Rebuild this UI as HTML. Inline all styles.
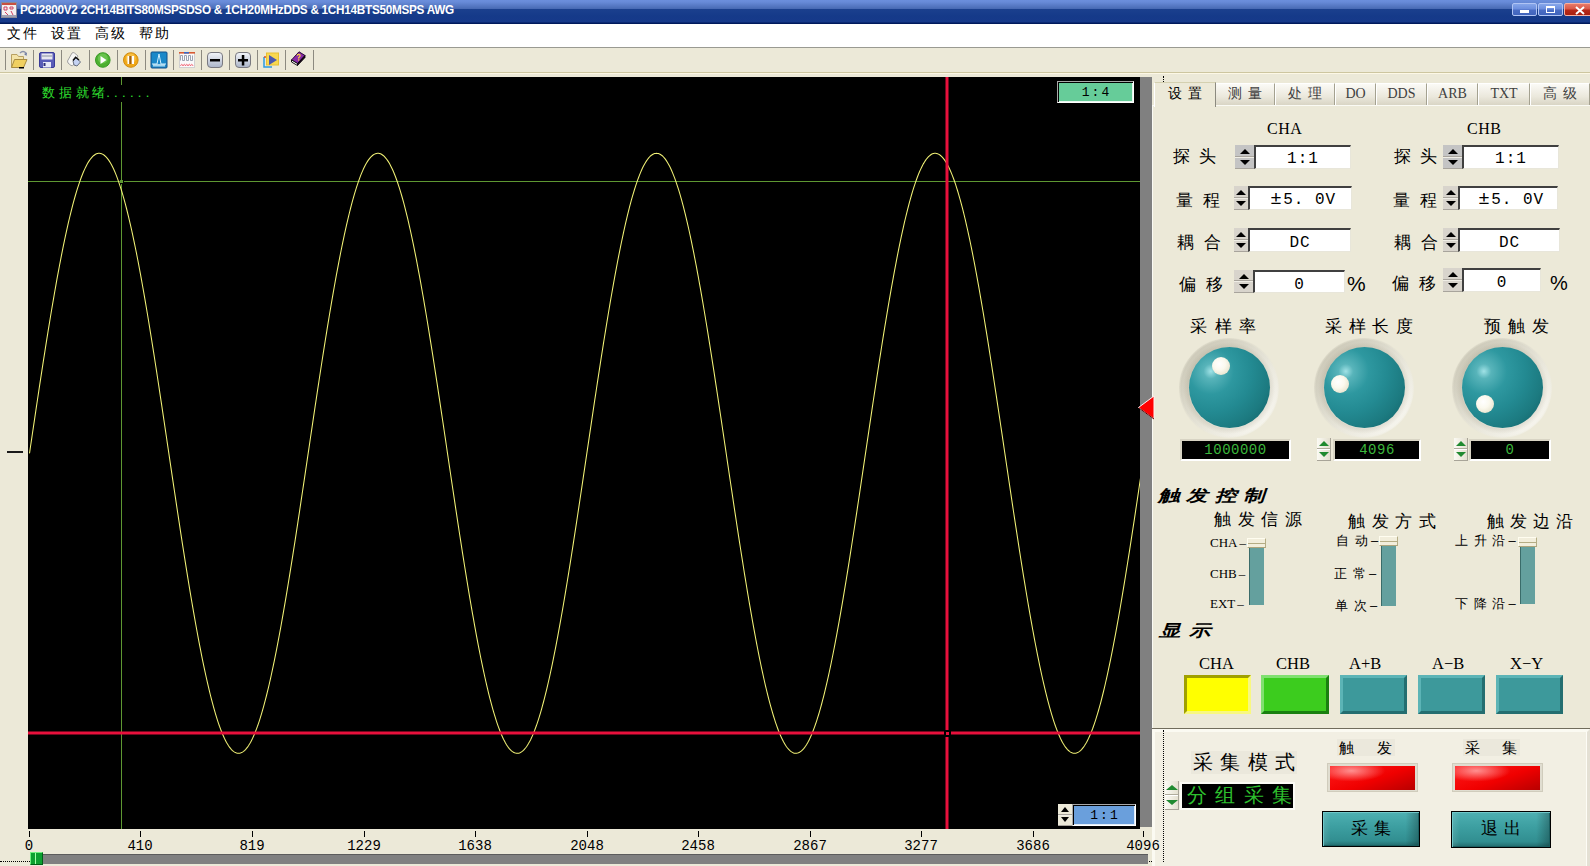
<!DOCTYPE html>
<html><head><meta charset="utf-8">
<style>
*{margin:0;padding:0;box-sizing:border-box}
html,body{width:1590px;height:866px;overflow:hidden;background:#ece9d8;font-family:"Liberation Sans",sans-serif;position:relative}
.a{position:absolute}
.cj{font-family:"Liberation Sans",sans-serif;white-space:nowrap}
.mono{font-family:"Liberation Mono",monospace;white-space:nowrap}
.serif{font-family:"Liberation Serif",serif;white-space:nowrap}
/* title */
#title{left:0;top:0;width:1590px;height:24px;background:linear-gradient(#6b8fdd 0px,#688bd8 2px,#4c6eb8 8px,#4668b2 9px,#1b408e 9px,#153a89 16px,#16398a 22px,#001a5c 23px,#001a5c 24px)}
#ttext{left:20px;top:2px;color:#fff;font-weight:bold;font-size:13px;letter-spacing:-0.3px;transform-origin:0 0;transform:scaleX(0.903);white-space:nowrap}
.tbtn{top:3px;height:13px;border:1px solid #b0c4f4;border-radius:2px;background:linear-gradient(#86a6ea 0%,#6c8ede 45%,#4a6cc4 55%,#4064bc 100%)}
/* menu */
#menu{left:0;top:24px;width:1590px;height:23px;background:#fff}
.mi{top:25px;font-size:14px;color:#000;letter-spacing:2px}
#tb{left:0;top:47px;width:1590px;height:26px;background:#ece9d8;border-top:1px solid #9a9a92}
.sep{top:50px;width:1px;height:20px;background:#8c8a80}
#tbl{left:0;top:72px;width:1590px;height:1px;background:#cdc6a0}
#tbl2{left:0;top:73px;width:1590px;height:1px;background:#fdf8e6}
/* scope */
#scope{left:28px;top:77px;width:1112px;height:752px;background:#000;overflow:hidden}
#gbar{left:1140px;top:77px;width:12px;height:750px;background:#808080}
.tick{top:831px;width:1px;height:6px;background:#000}
.xl{top:838px;font-size:14px;color:#000;font-family:"Liberation Mono",monospace;transform:translateX(-50%)}
/* panel */
#panel{left:1152px;top:105px;width:438px;height:623px;background:#ece9d8;border-left:1px solid #fafaf4;border-top:1px solid #fafaf4}
.tab{top:83px;height:22px;font-size:14px;color:#404040;text-align:center;line-height:19px;
 background:linear-gradient(#fbfaf6,#ebe8dc 60%,#d9d5c5);border-top:1px solid #fff;border-left:1px solid #fff;border-right:1px solid #a4a190}
.lbl{font-size:17px;color:#000}
.fld{background:#fff;font-family:"Liberation Mono",monospace;letter-spacing:1px;border-top:2px solid #404040;border-left:2px solid #404040;border-right:1px solid #e8e6da;border-bottom:1px solid #e8e6da;text-align:center;font-size:16px;color:#000;white-space:nowrap}
.spn{background:#d8d4cc;border-bottom:1px solid #a8a49c}
.spn i{position:absolute;left:50%;margin-left:-5px;width:0;height:0;border-left:5px solid transparent;border-right:5px solid transparent}
.spn .u{top:4px;border-bottom:5px solid #000}.spn .d{bottom:3px;border-top:5px solid #000}
.spn .m{position:absolute;left:0;right:0;top:50%;height:2px;margin-top:-1px;background:#f0eee6;border-top:1px solid #a8a49c}
.gspn i{position:absolute;left:50%;margin-left:-5px;width:0;height:0;border-left:5px solid transparent;border-right:5px solid transparent}
.gspn .u{top:3px;border-bottom:5px solid #208a30}.gspn .d{bottom:3px;border-top:5px solid #208a30}
.gspn .m{position:absolute;left:0;right:0;top:50%;height:2px;margin-top:-1px;background:#fff;border-top:1px solid #b0ac9c}
.knob{width:100px;height:100px;border-radius:50%;background:radial-gradient(circle at 50% 50%,rgba(0,0,0,0) 39px,rgba(90,80,50,0.10) 41px,rgba(0,0,0,0) 46px,rgba(255,255,255,0) 48px,rgba(236,233,216,0.6) 50px),linear-gradient(135deg,#c6c2b0 0%,#d6d3c4 30%,#ebe9de 62%,#fcfbf6 100%)}
.kb{position:absolute;left:10px;top:9px;width:81px;height:81px;border-radius:50%;background:radial-gradient(circle at 27% 30%,#a0e2e6 0%,#58b4ba 9%,#2e98a0 28%,#238a92 50%,#1c7a80 72%,#15686e 88%,#0a4448 100%)}
.kd{position:absolute;width:18px;height:18px;border-radius:50%;background:radial-gradient(circle at 40% 38%,#ffffff 0%,#fbf9ee 40%,#e8e4ce 78%,#cdc9b0 100%)}
.lcd{background:#000;border:2px solid #fff;border-top-color:#d8d4c4;border-left-color:#d8d4c4;color:#3cb83c;font-size:14px;text-align:center;line-height:18px;letter-spacing:0.5px}
.gspn{background:linear-gradient(90deg,#fbfaf4,#e4e0d0);border-right:1px solid #a8a498;border-bottom:1px solid #a8a498}
.sl{font-size:13px;color:#000}
.trk{background:#64a09e;border-left:1px solid #3a6c6a}
.thm{background:#f2eedc;border:1px solid;border-color:#fffdf0 #b4ac84 #aca47c #fffdf0}
.thm:after{content:"";position:absolute;left:0;right:0;top:4px;height:1px;background:#b4ac84}
.dl{top:654px;font-size:16.5px;color:#000}
.btn3{top:675px;height:39px;background:#3d999b;border:3px solid;border-color:#5cb4b6 #246e70 #246e70 #5cb4b6}
.led{width:91px;height:29px;background:#e0ddd0;border:1px solid #d0ccbc}
.led:after{content:"";position:absolute;left:2px;top:2px;width:85px;height:24px;background:radial-gradient(ellipse 40% 45% at 25% 20%,#ff9090 0%,rgba(255,40,40,0) 100%),linear-gradient(160deg,#ff1a1a 0%,#f00000 55%,#b80000 100%)}
.bbtn{background:linear-gradient(90deg,rgba(255,255,255,0.12) 0,rgba(255,255,255,0) 8%,rgba(0,0,0,0) 86%,rgba(0,0,0,0.28) 100%),linear-gradient(#4eb0b2,#3c9ea0 45%,#318e90 85%,#226a6c);border:1px solid #000;box-shadow:inset 1px 1px 0 #70c8ca,inset -1px -1px 0 #1a5e60;font-size:17px;text-align:center;line-height:33px;letter-spacing:6px;padding-left:6px}
</style></head><body>
<!-- title bar -->
<div id="title" class="a"></div>
<svg class="a" style="left:1px;top:2px" width="16" height="16"><rect x="0.5" y="0.5" width="15" height="15" fill="#f4f0f0" stroke="#8a8a98"/><rect x="1" y="1" width="14" height="2" fill="#c85040"/><path d="M3 5 h3 v3 h-3z M9 5 h3 v2 h-3z M4 10 l3 3 M10 9 l2 4" stroke="#d04060" stroke-width="1" fill="none"/><rect x="1" y="13" width="14" height="2" fill="#a0a0b0"/></svg>
<div id="ttext" class="a">PCI2800V2 2CH14BITS80MSPSDSO &amp; 1CH20MHzDDS &amp; 1CH14BTS50MSPS AWG</div>
<div class="a tbtn" style="left:1512px;width:25px"><div class="a" style="left:7px;top:6px;width:9px;height:3px;background:#fff"></div></div>
<div class="a tbtn" style="left:1538px;width:25px"><div class="a" style="left:7px;top:2px;width:9px;height:7px;border:1px solid #fff;border-top-width:2px"></div></div>
<div class="a tbtn" style="left:1564px;width:30px;background:linear-gradient(#e87a68 0%,#d85848 45%,#b82818 55%,#a82010 100%);border-color:#f8b0a0 #f8b0a0 #f8b0a0 #f8b0a0"><svg class="a" style="left:10px;top:2px" width="10" height="9"><path d="M1 1 L9 8 M9 1 L1 8" stroke="#fff" stroke-width="2"/></svg></div>
<!-- menu -->
<div id="menu" class="a"></div>
<div class="a mi cj" style="left:7px">文件</div>
<div class="a mi cj" style="left:51px">设置</div>
<div class="a mi cj" style="left:95px">高级</div>
<div class="a mi cj" style="left:139px">帮助</div>
<!-- toolbar -->
<div id="tb" class="a"></div>
<div id="tbl" class="a"></div>
<div id="tbl2" class="a"></div>
<div class="a sep" style="left:5px"></div>
<div class="a sep" style="left:33px"></div>
<div class="a sep" style="left:61px"></div>
<div class="a sep" style="left:89px"></div>
<div class="a sep" style="left:117px"></div>
<div class="a sep" style="left:145px"></div>
<div class="a sep" style="left:173px"></div>
<div class="a sep" style="left:201px"></div>
<div class="a sep" style="left:229px"></div>
<div class="a sep" style="left:257px"></div>
<div class="a sep" style="left:285px"></div>
<div class="a sep" style="left:313px"></div>
<svg class="a" style="left:0;top:48px" width="320" height="24">
 <!-- folder -->
 <path d="M11.5 19.5 V6.5 H17 L18.5 8.5 H23.5 V11" fill="#f3e3a6" stroke="#b8a060" stroke-width="1"/>
 <path d="M11.5 19.5 L14.5 11.5 H27 L23.5 19.5 Z" fill="#f0d060" stroke="#a88c40" stroke-width="1"/>
 <rect x="19" y="19" width="5" height="1.5" fill="#000"/>
 <path d="M20 5 Q23 2 26 5" fill="none" stroke="#8890a8" stroke-width="1.3"/>
 <path d="M24 6 L27 4.5 L26.5 8 Z" fill="#6a78a0"/>
 <!-- floppy -->
 <rect x="39.5" y="4.5" width="15" height="15" rx="1.5" fill="#5a5cb8" stroke="#3a3c98"/>
 <rect x="41.5" y="5.5" width="11" height="6" fill="#e8e8f0"/>
 <rect x="42" y="7" width="10" height="2" fill="#b8bcc8"/>
 <rect x="43" y="14" width="8" height="5.5" fill="#e8e8f8"/>
 <rect x="43.5" y="15" width="2" height="3" fill="#2a2c78"/>
 <!-- print -->
 <path d="M67.5 13 L72 5 Q73 4 74.5 5 L78 8 L73.5 17 Q72.5 18 71 17.5 L68 15 Z" fill="#f6f6f4" stroke="#a0a0a0" stroke-width="1"/>
 <path d="M73 13 L76 9.5 L80.5 14 L77 18 L74 17 Z" fill="#c4d2f2" stroke="#687080" stroke-width="1"/>
 <path d="M73 12.5 L75.6 9.2 L79 12" fill="none" stroke="#101010" stroke-width="1.5"/>
 <!-- play -->
 <circle cx="102.8" cy="12" r="7.3" fill="#4cb030" stroke="#3a9a28"/>
 <circle cx="102.8" cy="10.5" r="5" fill="#7cd060" opacity="0.6"/>
 <path d="M100.5 8 L106.5 12 L100.5 16 Z" fill="#fff"/>
 <!-- pause -->
 <circle cx="130.8" cy="12" r="7.3" fill="#f0a818" stroke="#d08c10"/>
 <circle cx="130.8" cy="10.5" r="5" fill="#ffd060" opacity="0.6"/>
 <rect x="127.5" y="8" width="2.5" height="8" fill="#fff"/>
 <rect x="131.5" y="8" width="2.5" height="8" fill="#fff"/>
 <rect x="129.2" y="8" width="2.3" height="8" fill="#a06010"/>
 <!-- fft -->
 <rect x="151" y="4" width="16" height="16" rx="1" fill="#1a88c8" stroke="#10508a"/>
 <path d="M152 16 H157 L159 6 L161 16 H166" fill="none" stroke="#d0f0ff" stroke-width="1"/>
 <rect x="153" y="16" width="12" height="2.5" fill="#c8e8f8" opacity="0.8"/>
 <!-- wave chart -->
 <rect x="179.5" y="4.5" width="15" height="15" fill="#fafafa" stroke="#d0d0d0"/>
 <rect x="179" y="4" width="16" height="1.6" fill="#d85a30"/>
 <rect x="184" y="4" width="5" height="1.6" fill="#3a6ac8"/>
 <path d="M180.5 12.5 V7.5 H182.5 V12.5 H184.5 V7.5 H186.5 V12.5 H188.5 V7.5 H190.5 V12.5 H192.5 V7.5" fill="none" stroke="#9098a8" stroke-width="0.9"/>
 <path d="M180.5 18 Q181.8 14.5 183 18 Q184.3 14.5 185.5 18 Q186.8 14.5 188 18 Q189.3 14.5 190.5 18 Q191.8 14.5 193 18" fill="none" stroke="#f06070" stroke-width="0.9"/>
 <!-- minus -->
 <rect x="207.5" y="4.5" width="15" height="15" rx="3.5" fill="url(#gbtn)" stroke="#7a7a80"/>
 <rect x="210" y="11" width="10" height="2.5" fill="#000"/>
 <!-- plus -->
 <rect x="235.5" y="4.5" width="15" height="15" rx="3.5" fill="url(#gbtn)" stroke="#7a7a80"/>
 <rect x="238" y="11" width="10" height="2.5" fill="#000"/>
 <rect x="241.8" y="7" width="2.5" height="10.5" fill="#000"/>
 <!-- play window -->
 <path d="M264 9 V19 H272" fill="none" stroke="#2a9ae0" stroke-width="1.5"/>
 <path d="M264 9 H266" fill="none" stroke="#e05020" stroke-width="1.5"/>
 <rect x="266.5" y="5" width="12" height="12" fill="#f8d850" stroke="#e8c030"/>
 <path d="M269 7 L277 12 L269 17 Z" fill="#4a58b0"/>
 <!-- book -->
 <path d="M291.5 12 L299 3.8 L305 7.5 L297.5 15.5 Z" fill="#8a2ca8" stroke="#2a0838" stroke-width="1"/>
 <path d="M291.5 12 L297.5 15.5 L297.5 17.5 L291.5 14 Z" fill="#fff" stroke="#000" stroke-width="0.9"/>
 <path d="M297.5 15.5 L305 7.5 L305 9.5 L297.5 17.5" fill="#1a0420" stroke="#000" stroke-width="0.8"/>
 <path d="M297 7.5 Q298.5 5.5 300 7 Q300.5 8.5 298.8 9.5 L298.5 10.5" fill="none" stroke="#f8d040" stroke-width="1.3"/>
 <rect x="298" y="11.3" width="1.3" height="1.3" fill="#f8d040"/>
 <defs><linearGradient id="gbtn" x1="0" y1="0" x2="0" y2="1"><stop offset="0" stop-color="#f4f6fa"/><stop offset="1" stop-color="#aab4c8"/></linearGradient></defs>
</svg>

<!-- scope -->
<div id="scope" class="a">
<svg width="1112" height="752" style="position:absolute;left:0;top:0">
 <line x1="0" y1="104.5" x2="1112" y2="104.5" stroke="#5e9832" stroke-width="1"/>
 <line x1="93.5" y1="0" x2="93.5" y2="752" stroke="#5e9832" stroke-width="1"/>
 <path d="M1.5 376.3 L2.5 369.5 L3.5 362.8 L4.5 356.0 L5.5 349.3 L6.5 342.6 L7.5 335.8 L8.5 329.1 L9.5 322.5 L10.5 315.8 L11.5 309.2 L12.5 302.7 L13.5 296.1 L14.5 289.6 L15.5 283.2 L16.5 276.8 L17.5 270.4 L18.5 264.1 L19.5 257.9 L20.5 251.7 L21.5 245.6 L22.5 239.5 L23.5 233.5 L24.5 227.6 L25.5 221.8 L26.5 216.0 L27.5 210.3 L28.5 204.7 L29.5 199.2 L30.5 193.8 L31.5 188.5 L32.5 183.3 L33.5 178.1 L34.5 173.1 L35.5 168.2 L36.5 163.4 L37.5 158.7 L38.5 154.1 L39.5 149.6 L40.5 145.2 L41.5 141.0 L42.5 136.8 L43.5 132.8 L44.5 128.9 L45.5 125.2 L46.5 121.5 L47.5 118.0 L48.5 114.6 L49.5 111.4 L50.5 108.3 L51.5 105.3 L52.5 102.5 L53.5 99.8 L54.5 97.2 L55.5 94.8 L56.5 92.6 L57.5 90.4 L58.5 88.5 L59.5 86.6 L60.5 84.9 L61.5 83.4 L62.5 82.0 L63.5 80.8 L64.5 79.7 L65.5 78.7 L66.5 78.0 L67.5 77.3 L68.5 76.8 L69.5 76.5 L70.5 76.3 L71.5 76.3 L72.5 76.4 L73.5 76.7 L74.5 77.1 L75.5 77.7 L76.5 78.5 L77.5 79.4 L78.5 80.4 L79.5 81.6 L80.5 82.9 L81.5 84.4 L82.5 86.0 L83.5 87.8 L84.5 89.8 L85.5 91.8 L86.5 94.0 L87.5 96.4 L88.5 98.9 L89.5 101.6 L90.5 104.4 L91.5 107.3 L92.5 110.3 L93.5 113.5 L94.5 116.9 L95.5 120.3 L96.5 123.9 L97.5 127.6 L98.5 131.5 L99.5 135.5 L100.5 139.6 L101.5 143.8 L102.5 148.1 L103.5 152.5 L104.5 157.1 L105.5 161.8 L106.5 166.6 L107.5 171.5 L108.5 176.4 L109.5 181.5 L110.5 186.7 L111.5 192.0 L112.5 197.4 L113.5 202.9 L114.5 208.5 L115.5 214.1 L116.5 219.8 L117.5 225.6 L118.5 231.5 L119.5 237.5 L120.5 243.5 L121.5 249.6 L122.5 255.8 L123.5 262.0 L124.5 268.3 L125.5 274.6 L126.5 281.0 L127.5 287.5 L128.5 293.9 L129.5 300.5 L130.5 307.0 L131.5 313.6 L132.5 320.3 L133.5 326.9 L134.5 333.6 L135.5 340.3 L136.5 347.0 L137.5 353.8 L138.5 360.5 L139.5 367.3 L140.5 374.0 L141.5 380.8 L142.5 387.6 L143.5 394.3 L144.5 401.1 L145.5 407.8 L146.5 414.5 L147.5 421.2 L148.5 427.9 L149.5 434.5 L150.5 441.2 L151.5 447.7 L152.5 454.3 L153.5 460.8 L154.5 467.3 L155.5 473.7 L156.5 480.1 L157.5 486.4 L158.5 492.7 L159.5 498.9 L160.5 505.0 L161.5 511.1 L162.5 517.1 L163.5 523.0 L164.5 528.9 L165.5 534.7 L166.5 540.4 L167.5 546.0 L168.5 551.5 L169.5 557.0 L170.5 562.3 L171.5 567.6 L172.5 572.7 L173.5 577.8 L174.5 582.8 L175.5 587.6 L176.5 592.4 L177.5 597.0 L178.5 601.5 L179.5 605.9 L180.5 610.2 L181.5 614.4 L182.5 618.5 L183.5 622.4 L184.5 626.2 L185.5 629.9 L186.5 633.4 L187.5 636.8 L188.5 640.1 L189.5 643.3 L190.5 646.3 L191.5 649.2 L192.5 651.9 L193.5 654.5 L194.5 657.0 L195.5 659.3 L196.5 661.5 L197.5 663.5 L198.5 665.4 L199.5 667.1 L200.5 668.7 L201.5 670.1 L202.5 671.4 L203.5 672.6 L204.5 673.6 L205.5 674.4 L206.5 675.1 L207.5 675.6 L208.5 676.0 L209.5 676.2 L210.5 676.3 L211.5 676.2 L212.5 676.0 L213.5 675.6 L214.5 675.1 L215.5 674.4 L216.5 673.6 L217.5 672.6 L218.5 671.4 L219.5 670.1 L220.5 668.7 L221.5 667.1 L222.5 665.4 L223.5 663.5 L224.5 661.5 L225.5 659.3 L226.5 657.0 L227.5 654.5 L228.5 651.9 L229.5 649.2 L230.5 646.3 L231.5 643.3 L232.5 640.2 L233.5 636.9 L234.5 633.4 L235.5 629.9 L236.5 626.2 L237.5 622.4 L238.5 618.5 L239.5 614.4 L240.5 610.3 L241.5 606.0 L242.5 601.6 L243.5 597.0 L244.5 592.4 L245.5 587.6 L246.5 582.8 L247.5 577.8 L248.5 572.8 L249.5 567.6 L250.5 562.4 L251.5 557.0 L252.5 551.6 L253.5 546.0 L254.5 540.4 L255.5 534.7 L256.5 528.9 L257.5 523.1 L258.5 517.1 L259.5 511.1 L260.5 505.0 L261.5 498.9 L262.5 492.7 L263.5 486.4 L264.5 480.1 L265.5 473.7 L266.5 467.3 L267.5 460.8 L268.5 454.3 L269.5 447.8 L270.5 441.2 L271.5 434.6 L272.5 427.9 L273.5 421.2 L274.5 414.5 L275.5 407.8 L276.5 401.1 L277.5 394.3 L278.5 387.6 L279.5 380.8 L280.5 374.1 L281.5 367.3 L282.5 360.5 L283.5 353.8 L284.5 347.1 L285.5 340.3 L286.5 333.6 L287.5 326.9 L288.5 320.3 L289.5 313.7 L290.5 307.1 L291.5 300.5 L292.5 294.0 L293.5 287.5 L294.5 281.0 L295.5 274.7 L296.5 268.3 L297.5 262.0 L298.5 255.8 L299.5 249.6 L300.5 243.6 L301.5 237.5 L302.5 231.6 L303.5 225.7 L304.5 219.9 L305.5 214.1 L306.5 208.5 L307.5 202.9 L308.5 197.4 L309.5 192.1 L310.5 186.8 L311.5 181.6 L312.5 176.5 L313.5 171.5 L314.5 166.6 L315.5 161.8 L316.5 157.1 L317.5 152.6 L318.5 148.1 L319.5 143.8 L320.5 139.6 L321.5 135.5 L322.5 131.5 L323.5 127.7 L324.5 123.9 L325.5 120.3 L326.5 116.9 L327.5 113.6 L328.5 110.4 L329.5 107.3 L330.5 104.4 L331.5 101.6 L332.5 98.9 L333.5 96.4 L334.5 94.1 L335.5 91.8 L336.5 89.8 L337.5 87.8 L338.5 86.0 L339.5 84.4 L340.5 82.9 L341.5 81.6 L342.5 80.4 L343.5 79.4 L344.5 78.5 L345.5 77.7 L346.5 77.1 L347.5 76.7 L348.5 76.4 L349.5 76.3 L350.5 76.3 L351.5 76.5 L352.5 76.8 L353.5 77.3 L354.5 78.0 L355.5 78.7 L356.5 79.7 L357.5 80.8 L358.5 82.0 L359.5 83.4 L360.5 84.9 L361.5 86.6 L362.5 88.4 L363.5 90.4 L364.5 92.5 L365.5 94.8 L366.5 97.2 L367.5 99.8 L368.5 102.5 L369.5 105.3 L370.5 108.3 L371.5 111.4 L372.5 114.6 L373.5 118.0 L374.5 121.5 L375.5 125.1 L376.5 128.9 L377.5 132.8 L378.5 136.8 L379.5 140.9 L380.5 145.2 L381.5 149.6 L382.5 154.0 L383.5 158.6 L384.5 163.4 L385.5 168.2 L386.5 173.1 L387.5 178.1 L388.5 183.2 L389.5 188.5 L390.5 193.8 L391.5 199.2 L392.5 204.7 L393.5 210.3 L394.5 216.0 L395.5 221.7 L396.5 227.6 L397.5 233.5 L398.5 239.5 L399.5 245.5 L400.5 251.6 L401.5 257.8 L402.5 264.1 L403.5 270.4 L404.5 276.7 L405.5 283.1 L406.5 289.6 L407.5 296.1 L408.5 302.6 L409.5 309.2 L410.5 315.8 L411.5 322.4 L412.5 329.1 L413.5 335.8 L414.5 342.5 L415.5 349.2 L416.5 356.0 L417.5 362.7 L418.5 369.5 L419.5 376.3 L420.5 383.0 L421.5 389.8 L422.5 396.5 L423.5 403.3 L424.5 410.0 L425.5 416.7 L426.5 423.4 L427.5 430.1 L428.5 436.7 L429.5 443.3 L430.5 449.9 L431.5 456.5 L432.5 462.9 L433.5 469.4 L434.5 475.8 L435.5 482.2 L436.5 488.5 L437.5 494.7 L438.5 500.9 L439.5 507.0 L440.5 513.1 L441.5 519.1 L442.5 525.0 L443.5 530.8 L444.5 536.6 L445.5 542.2 L446.5 547.8 L447.5 553.3 L448.5 558.8 L449.5 564.1 L450.5 569.3 L451.5 574.4 L452.5 579.5 L453.5 584.4 L454.5 589.2 L455.5 593.9 L456.5 598.5 L457.5 603.0 L458.5 607.4 L459.5 611.6 L460.5 615.8 L461.5 619.8 L462.5 623.7 L463.5 627.4 L464.5 631.1 L465.5 634.6 L466.5 637.9 L467.5 641.2 L468.5 644.3 L469.5 647.3 L470.5 650.1 L471.5 652.8 L472.5 655.4 L473.5 657.8 L474.5 660.0 L475.5 662.2 L476.5 664.1 L477.5 666.0 L478.5 667.7 L479.5 669.2 L480.5 670.6 L481.5 671.8 L482.5 672.9 L483.5 673.8 L484.5 674.6 L485.5 675.3 L486.5 675.8 L487.5 676.1 L488.5 676.3 L489.5 676.3 L490.5 676.2 L491.5 675.9 L492.5 675.5 L493.5 674.9 L494.5 674.1 L495.5 673.3 L496.5 672.2 L497.5 671.0 L498.5 669.7 L499.5 668.2 L500.5 666.6 L501.5 664.8 L502.5 662.9 L503.5 660.8 L504.5 658.6 L505.5 656.2 L506.5 653.7 L507.5 651.0 L508.5 648.3 L509.5 645.3 L510.5 642.3 L511.5 639.1 L512.5 635.8 L513.5 632.3 L514.5 628.7 L515.5 625.0 L516.5 621.1 L517.5 617.2 L518.5 613.1 L519.5 608.9 L520.5 604.5 L521.5 600.1 L522.5 595.5 L523.5 590.8 L524.5 586.1 L525.5 581.2 L526.5 576.2 L527.5 571.1 L528.5 565.9 L529.5 560.6 L530.5 555.2 L531.5 549.7 L532.5 544.2 L533.5 538.5 L534.5 532.8 L535.5 527.0 L536.5 521.1 L537.5 515.1 L538.5 509.1 L539.5 503.0 L540.5 496.8 L541.5 490.6 L542.5 484.3 L543.5 478.0 L544.5 471.6 L545.5 465.2 L546.5 458.7 L547.5 452.2 L548.5 445.6 L549.5 439.0 L550.5 432.4 L551.5 425.7 L552.5 419.0 L553.5 412.3 L554.5 405.6 L555.5 398.9 L556.5 392.1 L557.5 385.4 L558.5 378.6 L559.5 371.8 L560.5 365.1 L561.5 358.3 L562.5 351.6 L563.5 344.8 L564.5 338.1 L565.5 331.4 L566.5 324.7 L567.5 318.1 L568.5 311.5 L569.5 304.9 L570.5 298.3 L571.5 291.8 L572.5 285.4 L573.5 278.9 L574.5 272.6 L575.5 266.2 L576.5 260.0 L577.5 253.8 L578.5 247.6 L579.5 241.6 L580.5 235.5 L581.5 229.6 L582.5 223.7 L583.5 218.0 L584.5 212.3 L585.5 206.6 L586.5 201.1 L587.5 195.7 L588.5 190.3 L589.5 185.0 L590.5 179.9 L591.5 174.8 L592.5 169.9 L593.5 165.0 L594.5 160.3 L595.5 155.6 L596.5 151.1 L597.5 146.7 L598.5 142.4 L599.5 138.2 L600.5 134.2 L601.5 130.2 L602.5 126.4 L603.5 122.7 L604.5 119.2 L605.5 115.8 L606.5 112.5 L607.5 109.3 L608.5 106.3 L609.5 103.4 L610.5 100.7 L611.5 98.1 L612.5 95.6 L613.5 93.3 L614.5 91.1 L615.5 89.1 L616.5 87.2 L617.5 85.5 L618.5 83.9 L619.5 82.5 L620.5 81.2 L621.5 80.0 L622.5 79.0 L623.5 78.2 L624.5 77.5 L625.5 77.0 L626.5 76.6 L627.5 76.4 L628.5 76.3 L629.5 76.4 L630.5 76.6 L631.5 77.0 L632.5 77.5 L633.5 78.2 L634.5 79.0 L635.5 80.0 L636.5 81.2 L637.5 82.4 L638.5 83.9 L639.5 85.5 L640.5 87.2 L641.5 89.1 L642.5 91.1 L643.5 93.3 L644.5 95.6 L645.5 98.1 L646.5 100.6 L647.5 103.4 L648.5 106.3 L649.5 109.3 L650.5 112.4 L651.5 115.7 L652.5 119.1 L653.5 122.7 L654.5 126.4 L655.5 130.2 L656.5 134.1 L657.5 138.1 L658.5 142.3 L659.5 146.6 L660.5 151.0 L661.5 155.5 L662.5 160.2 L663.5 164.9 L664.5 169.8 L665.5 174.7 L666.5 179.8 L667.5 185.0 L668.5 190.2 L669.5 195.6 L670.5 201.0 L671.5 206.6 L672.5 212.2 L673.5 217.9 L674.5 223.7 L675.5 229.5 L676.5 235.5 L677.5 241.5 L678.5 247.5 L679.5 253.7 L680.5 259.9 L681.5 266.1 L682.5 272.5 L683.5 278.8 L684.5 285.3 L685.5 291.7 L686.5 298.2 L687.5 304.8 L688.5 311.4 L689.5 318.0 L690.5 324.6 L691.5 331.3 L692.5 338.0 L693.5 344.7 L694.5 351.5 L695.5 358.2 L696.5 365.0 L697.5 371.7 L698.5 378.5 L699.5 385.3 L700.5 392.0 L701.5 398.8 L702.5 405.5 L703.5 412.2 L704.5 418.9 L705.5 425.6 L706.5 432.3 L707.5 438.9 L708.5 445.5 L709.5 452.1 L710.5 458.6 L711.5 465.1 L712.5 471.5 L713.5 477.9 L714.5 484.2 L715.5 490.5 L716.5 496.8 L717.5 502.9 L718.5 509.0 L719.5 515.1 L720.5 521.0 L721.5 526.9 L722.5 532.7 L723.5 538.4 L724.5 544.1 L725.5 549.7 L726.5 555.1 L727.5 560.5 L728.5 565.8 L729.5 571.0 L730.5 576.1 L731.5 581.1 L732.5 586.0 L733.5 590.8 L734.5 595.4 L735.5 600.0 L736.5 604.5 L737.5 608.8 L738.5 613.0 L739.5 617.1 L740.5 621.1 L741.5 624.9 L742.5 628.6 L743.5 632.2 L744.5 635.7 L745.5 639.0 L746.5 642.2 L747.5 645.3 L748.5 648.2 L749.5 651.0 L750.5 653.7 L751.5 656.2 L752.5 658.5 L753.5 660.7 L754.5 662.8 L755.5 664.8 L756.5 666.5 L757.5 668.2 L758.5 669.7 L759.5 671.0 L760.5 672.2 L761.5 673.2 L762.5 674.1 L763.5 674.9 L764.5 675.4 L765.5 675.9 L766.5 676.2 L767.5 676.3 L768.5 676.3 L769.5 676.1 L770.5 675.8 L771.5 675.3 L772.5 674.6 L773.5 673.9 L774.5 672.9 L775.5 671.8 L776.5 670.6 L777.5 669.2 L778.5 667.7 L779.5 666.0 L780.5 664.2 L781.5 662.2 L782.5 660.1 L783.5 657.8 L784.5 655.4 L785.5 652.8 L786.5 650.1 L787.5 647.3 L788.5 644.3 L789.5 641.2 L790.5 638.0 L791.5 634.6 L792.5 631.1 L793.5 627.5 L794.5 623.7 L795.5 619.8 L796.5 615.8 L797.5 611.7 L798.5 607.4 L799.5 603.1 L800.5 598.6 L801.5 594.0 L802.5 589.3 L803.5 584.5 L804.5 579.5 L805.5 574.5 L806.5 569.4 L807.5 564.2 L808.5 558.8 L809.5 553.4 L810.5 547.9 L811.5 542.3 L812.5 536.6 L813.5 530.9 L814.5 525.1 L815.5 519.1 L816.5 513.2 L817.5 507.1 L818.5 501.0 L819.5 494.8 L820.5 488.6 L821.5 482.3 L822.5 475.9 L823.5 469.5 L824.5 463.0 L825.5 456.5 L826.5 450.0 L827.5 443.4 L828.5 436.8 L829.5 430.2 L830.5 423.5 L831.5 416.8 L832.5 410.1 L833.5 403.4 L834.5 396.6 L835.5 389.9 L836.5 383.1 L837.5 376.4 L838.5 369.6 L839.5 362.8 L840.5 356.1 L841.5 349.3 L842.5 342.6 L843.5 335.9 L844.5 329.2 L845.5 322.5 L846.5 315.9 L847.5 309.3 L848.5 302.7 L849.5 296.2 L850.5 289.7 L851.5 283.2 L852.5 276.8 L853.5 270.5 L854.5 264.2 L855.5 257.9 L856.5 251.7 L857.5 245.6 L858.5 239.6 L859.5 233.6 L860.5 227.7 L861.5 221.8 L862.5 216.1 L863.5 210.4 L864.5 204.8 L865.5 199.3 L866.5 193.9 L867.5 188.6 L868.5 183.3 L869.5 178.2 L870.5 173.2 L871.5 168.2 L872.5 163.4 L873.5 158.7 L874.5 154.1 L875.5 149.6 L876.5 145.2 L877.5 141.0 L878.5 136.9 L879.5 132.8 L880.5 129.0 L881.5 125.2 L882.5 121.6 L883.5 118.0 L884.5 114.7 L885.5 111.4 L886.5 108.3 L887.5 105.3 L888.5 102.5 L889.5 99.8 L890.5 97.3 L891.5 94.8 L892.5 92.6 L893.5 90.5 L894.5 88.5 L895.5 86.6 L896.5 85.0 L897.5 83.4 L898.5 82.0 L899.5 80.8 L900.5 79.7 L901.5 78.8 L902.5 78.0 L903.5 77.3 L904.5 76.8 L905.5 76.5 L906.5 76.3 L907.5 76.3 L908.5 76.4 L909.5 76.7 L910.5 77.1 L911.5 77.7 L912.5 78.5 L913.5 79.3 L914.5 80.4 L915.5 81.6 L916.5 82.9 L917.5 84.4 L918.5 86.0 L919.5 87.8 L920.5 89.7 L921.5 91.8 L922.5 94.0 L923.5 96.4 L924.5 98.9 L925.5 101.5 L926.5 104.3 L927.5 107.2 L928.5 110.3 L929.5 113.5 L930.5 116.8 L931.5 120.3 L932.5 123.9 L933.5 127.6 L934.5 131.4 L935.5 135.4 L936.5 139.5 L937.5 143.7 L938.5 148.1 L939.5 152.5 L940.5 157.1 L941.5 161.7 L942.5 166.5 L943.5 171.4 L944.5 176.4 L945.5 181.5 L946.5 186.7 L947.5 192.0 L948.5 197.4 L949.5 202.8 L950.5 208.4 L951.5 214.0 L952.5 219.8 L953.5 225.6 L954.5 231.5 L955.5 237.4 L956.5 243.5 L957.5 249.6 L958.5 255.7 L959.5 261.9 L960.5 268.2 L961.5 274.6 L962.5 281.0 L963.5 287.4 L964.5 293.9 L965.5 300.4 L966.5 307.0 L967.5 313.6 L968.5 320.2 L969.5 326.8 L970.5 333.5 L971.5 340.2 L972.5 347.0 L973.5 353.7 L974.5 360.4 L975.5 367.2 L976.5 374.0 L977.5 380.7 L978.5 387.5 L979.5 394.2 L980.5 401.0 L981.5 407.7 L982.5 414.4 L983.5 421.1 L984.5 427.8 L985.5 434.5 L986.5 441.1 L987.5 447.7 L988.5 454.2 L989.5 460.7 L990.5 467.2 L991.5 473.6 L992.5 480.0 L993.5 486.3 L994.5 492.6 L995.5 498.8 L996.5 504.9 L997.5 511.0 L998.5 517.0 L999.5 523.0 L1000.5 528.8 L1001.5 534.6 L1002.5 540.3 L1003.5 545.9 L1004.5 551.5 L1005.5 556.9 L1006.5 562.3 L1007.5 567.5 L1008.5 572.7 L1009.5 577.8 L1010.5 582.7 L1011.5 587.6 L1012.5 592.3 L1013.5 597.0 L1014.5 601.5 L1015.5 605.9 L1016.5 610.2 L1017.5 614.4 L1018.5 618.4 L1019.5 622.4 L1020.5 626.2 L1021.5 629.8 L1022.5 633.4 L1023.5 636.8 L1024.5 640.1 L1025.5 643.3 L1026.5 646.3 L1027.5 649.2 L1028.5 651.9 L1029.5 654.5 L1030.5 657.0 L1031.5 659.3 L1032.5 661.5 L1033.5 663.5 L1034.5 665.4 L1035.5 667.1 L1036.5 668.7 L1037.5 670.1 L1038.5 671.4 L1039.5 672.6 L1040.5 673.5 L1041.5 674.4 L1042.5 675.1 L1043.5 675.6 L1044.5 676.0 L1045.5 676.2 L1046.5 676.3 L1047.5 676.2 L1048.5 676.0 L1049.5 675.6 L1050.5 675.1 L1051.5 674.4 L1052.5 673.6 L1053.5 672.6 L1054.5 671.4 L1055.5 670.2 L1056.5 668.7 L1057.5 667.1 L1058.5 665.4 L1059.5 663.5 L1060.5 661.5 L1061.5 659.3 L1062.5 657.0 L1063.5 654.6 L1064.5 652.0 L1065.5 649.2 L1066.5 646.3 L1067.5 643.3 L1068.5 640.2 L1069.5 636.9 L1070.5 633.5 L1071.5 629.9 L1072.5 626.3 L1073.5 622.5 L1074.5 618.5 L1075.5 614.5 L1076.5 610.3 L1077.5 606.0 L1078.5 601.6 L1079.5 597.1 L1080.5 592.4 L1081.5 587.7 L1082.5 582.8 L1083.5 577.9 L1084.5 572.8 L1085.5 567.7 L1086.5 562.4 L1087.5 557.1 L1088.5 551.6 L1089.5 546.1 L1090.5 540.5 L1091.5 534.8 L1092.5 529.0 L1093.5 523.1 L1094.5 517.2 L1095.5 511.2 L1096.5 505.1 L1097.5 499.0 L1098.5 492.7 L1099.5 486.5 L1100.5 480.2 L1101.5 473.8 L1102.5 467.4 L1103.5 460.9 L1104.5 454.4 L1105.5 447.8 L1106.5 441.3 L1107.5 434.6 L1108.5 428.0 L1109.5 421.3 L1110.5 414.6 L1111.5 407.9 L1112.5 401.2" fill="none" stroke="#f2f276" stroke-width="1.05"/>
 <line x1="0" y1="656" x2="1112" y2="656" stroke="#e8103c" stroke-width="3"/>
 <line x1="919" y1="0" x2="919" y2="752" stroke="#e8103c" stroke-width="3"/>
 <rect x="916" y="653" width="7" height="7" fill="#000"/><rect x="918" y="655" width="3" height="3" fill="#e8103c"/>
 <rect x="92" y="103" width="4" height="4" fill="#000"/><rect x="92" y="103" width="3" height="3" fill="#5e9832"/>
</svg>
</div>
<div id="gbar" class="a"></div>
<div class="a" style="left:7px;top:451px;width:16px;height:2px;background:#1a1a1a"></div>
<div class="a cj" style="left:42px;top:85px;height:17px;background:#000;color:#30e030;font-size:13px;letter-spacing:3.8px;line-height:16px;padding-right:0">数据就绪<span style="letter-spacing:4.3px;position:relative;left:-3px">......</span></div>
<div class="a mono" style="left:1057px;top:81px;width:77px;height:22px;background:#66cc99;border:1px solid;border-color:#a8a8a8 #fff #fff #a8a8a8;box-shadow:inset 1px 1px 0 #000,inset -1px -1px 0 #e8f8f0;font-size:13px;text-align:center;line-height:22px;letter-spacing:2px;padding-left:2px">1:4</div>
<div class="a spn" style="left:1058px;top:804px;width:14px;height:22px;background:#ece9d8"><i class="u" style="margin-left:-4px;border-width:0 4px 5px 4px;top:3px"></i><span class="m"></span><i class="d" style="margin-left:-4px;border-width:5px 4px 0 4px;bottom:3px"></i></div>
<div class="a mono" style="left:1072px;top:804px;width:64px;height:22px;background:#6a9fdc;border:1px solid;border-color:#a8a8a8 #fff #fff #a8a8a8;box-shadow:inset 1px 1px 0 #000,inset -1px -1px 0 #e0ecf8;font-size:13px;text-align:center;line-height:22px;letter-spacing:2px;padding-left:2px">1:1</div>
<svg class="a" style="left:1136px;top:394px;z-index:5" width="20" height="28"><path d="M2.5 13.5 L18 2 V25 Z" fill="#ff0000" stroke="#fff0f0" stroke-width="1"/><path d="M3 14 L18 25" stroke="#600000" stroke-width="1"/></svg>
<!-- scrollbar -->


<!-- panel -->
<div id="panel" class="a"></div>
<!-- focus dotted rect -->
<div class="a" style="left:1163px;top:76px;width:0;height:6px;border-left:1px dotted #000"></div>
<div class="a" style="left:0;top:861px;width:1164px;height:0;border-top:1px dotted #000"></div>
<!-- tabs -->

<div class="a tab serif" style="left:1215px;width:60px;letter-spacing:6px;padding-left:6px">测量</div>
<div class="a tab serif" style="left:1275px;width:60px;letter-spacing:6px;padding-left:6px">处理</div>
<div class="a tab serif" style="left:1335px;width:41px">DO</div>
<div class="a tab serif" style="left:1376px;width:51px">DDS</div>
<div class="a tab serif" style="left:1427px;width:51px">ARB</div>
<div class="a tab serif" style="left:1478px;width:52px">TXT</div>
<div class="a tab serif" style="left:1530px;width:60px;letter-spacing:6px;padding-left:6px">高级</div>
<div class="a serif" style="left:1154px;top:82px;width:62px;height:25px;background:#ece9d8;border-top:1px solid #d4d0b0;border-left:1px solid #fff;border-right:1px solid #8c8a80;font-size:14px;color:#000;text-align:center;line-height:21px;letter-spacing:6px;padding-left:5px">设置</div>

<!-- CHA/CHB -->
<div class="a serif" style="left:1267px;top:120px;font-size:16px;letter-spacing:0.5px">CHA</div>
<div class="a serif" style="left:1467px;top:120px;font-size:16px;letter-spacing:0.5px">CHB</div>

<div class="a lbl cj" style="left:1173px;top:145px;letter-spacing:9px">探头</div>
<div class="a lbl cj" style="left:1176px;top:189px;letter-spacing:10px">量程</div>
<div class="a lbl cj" style="left:1177px;top:231px;letter-spacing:10px">耦合</div>
<div class="a lbl cj" style="left:1179px;top:273px;letter-spacing:10px">偏移</div>
<div class="a lbl cj" style="left:1394px;top:145px;letter-spacing:9px">探头</div>
<div class="a lbl cj" style="left:1393px;top:189px;letter-spacing:10px">量程</div>
<div class="a lbl cj" style="left:1394px;top:231px;letter-spacing:10px">耦合</div>
<div class="a lbl cj" style="left:1392px;top:272px;letter-spacing:10px">偏移</div>

<!-- spin + fields -->
<div class="a spn" style="left:1235px;top:145px;width:19px;height:24px;background:#c4c4c4"><i class="u"></i><span class="m"></span><i class="d"></i></div>
<div class="a fld" style="left:1254px;top:145px;width:97px;height:24px;line-height:21px;padding-top:2px">1:1</div>
<div class="a spn" style="left:1234px;top:186px;width:14px;height:24px"><i class="u"></i><span class="m"></span><i class="d"></i></div>
<div class="a fld" style="left:1248px;top:186px;width:104px;height:24px;line-height:21px;padding-top:2px;padding-left:6px"><span style="font-family:'Liberation Sans',sans-serif;font-size:19px;letter-spacing:2px;line-height:10px">±</span>5.&nbsp;0V</div>
<div class="a spn" style="left:1234px;top:228px;width:14px;height:24px"><i class="u"></i><span class="m"></span><i class="d"></i></div>
<div class="a fld" style="left:1248px;top:228px;width:103px;height:24px;line-height:21px;padding-top:3px">DC</div>
<div class="a spn" style="left:1234px;top:270px;width:19px;height:23px"><i class="u"></i><span class="m"></span><i class="d"></i></div>
<div class="a fld" style="left:1253px;top:270px;width:92px;height:23px;line-height:20px;padding-top:3px">0</div>
<div class="a cj" style="left:1347px;top:272px;font-size:21px">%</div>

<div class="a spn" style="left:1443px;top:145px;width:19px;height:24px;background:#c4c4c4"><i class="u"></i><span class="m"></span><i class="d"></i></div>
<div class="a fld" style="left:1462px;top:145px;width:97px;height:24px;line-height:21px;padding-top:2px">1:1</div>
<div class="a spn" style="left:1443px;top:186px;width:15px;height:24px"><i class="u"></i><span class="m"></span><i class="d"></i></div>
<div class="a fld" style="left:1458px;top:186px;width:100px;height:24px;line-height:21px;padding-top:2px;padding-left:6px"><span style="font-family:'Liberation Sans',sans-serif;font-size:19px;letter-spacing:2px;line-height:10px">±</span>5.&nbsp;0V</div>
<div class="a spn" style="left:1443px;top:228px;width:15px;height:24px"><i class="u"></i><span class="m"></span><i class="d"></i></div>
<div class="a fld" style="left:1458px;top:228px;width:102px;height:24px;line-height:21px;padding-top:3px">DC</div>
<div class="a spn" style="left:1443px;top:268px;width:19px;height:24px"><i class="u"></i><span class="m"></span><i class="d"></i></div>
<div class="a fld" style="left:1462px;top:268px;width:79px;height:24px;line-height:21px;padding-top:3px">0</div>
<div class="a cj" style="left:1550px;top:272px;font-size:20px">%</div>

<!-- knobs -->
<div class="a lbl cj" style="left:1190px;top:315px;letter-spacing:7.5px">采样率</div>
<div class="a lbl cj" style="left:1325px;top:315px;letter-spacing:6.7px">采样长度</div>
<div class="a lbl cj" style="left:1484px;top:315px;letter-spacing:7.2px">预触发</div>
<div class="a knob" style="left:1179px;top:338px"><div class="kb"></div><div class="kd" style="left:33px;top:19px"></div></div>
<div class="a knob" style="left:1314px;top:338px"><div class="kb"></div><div class="kd" style="left:17px;top:37px"></div></div>
<div class="a knob" style="left:1452px;top:338px"><div class="kb"></div><div class="kd" style="left:24px;top:57px"></div></div>

<div class="a lcd mono" style="left:1180px;top:439px;width:111px;height:22px">1000000</div>
<div class="a gspn" style="left:1317px;top:438px;width:14px;height:23px"><i class="u"></i><span class="m"></span><i class="d"></i></div>
<div class="a lcd mono" style="left:1333px;top:439px;width:88px;height:22px">4096</div>
<div class="a gspn" style="left:1454px;top:438px;width:14px;height:23px"><i class="u"></i><span class="m"></span><i class="d"></i></div>
<div class="a lcd mono" style="left:1469px;top:439px;width:82px;height:22px">0</div>

<!-- trigger -->
<div class="a cj" style="left:1158px;top:486px;font-size:16px;font-style:italic;font-weight:bold;letter-spacing:5px;transform:scaleX(1.35);transform-origin:0 0">触发控制</div>
<div class="a lbl cj" style="left:1214px;top:508px;letter-spacing:6.5px">触发信源</div>
<div class="a lbl cj" style="left:1348px;top:510px;letter-spacing:6.5px">触发方式</div>
<div class="a lbl cj" style="left:1487px;top:510px;letter-spacing:6px">触发边沿</div>
<div class="a sl serif" style="left:1210px;top:535px">CHA<span style="margin-left:2px">–</span></div>
<div class="a sl serif" style="left:1210px;top:566px">CHB<span style="margin-left:2px">–</span></div>
<div class="a sl serif" style="left:1210px;top:596px">EXT<span style="margin-left:2px">–</span></div>
<div class="a trk" style="left:1249px;top:548px;width:15px;height:57px"></div>
<div class="a thm" style="left:1247px;top:538px;width:19px;height:10px"></div>
<div class="a sl cj" style="left:1336px;top:532px;letter-spacing:5.5px">自动<span style="letter-spacing:0;margin-left:-2px">–</span></div>
<div class="a sl cj" style="left:1334px;top:565px;letter-spacing:5.5px">正常<span style="letter-spacing:0;margin-left:-2px">–</span></div>
<div class="a sl cj" style="left:1335px;top:597px;letter-spacing:5.5px">单次<span style="letter-spacing:0;margin-left:-2px">–</span></div>
<div class="a trk" style="left:1381px;top:546px;width:15px;height:60px"></div>
<div class="a thm" style="left:1379px;top:536px;width:19px;height:10px"></div>
<div class="a sl cj" style="left:1455px;top:532px;letter-spacing:5.5px">上升沿<span style="letter-spacing:0;margin-left:-2px">–</span></div>
<div class="a sl cj" style="left:1455px;top:595px;letter-spacing:5.5px">下降沿<span style="letter-spacing:0;margin-left:-2px">–</span></div>
<div class="a trk" style="left:1520px;top:547px;width:15px;height:57px"></div>
<div class="a thm" style="left:1518px;top:537px;width:19px;height:10px"></div>

<!-- display -->
<div class="a cj" style="left:1159px;top:621px;font-size:16px;font-style:italic;font-weight:bold;letter-spacing:6px;transform:scaleX(1.35);transform-origin:0 0">显示</div>
<div class="a serif dl" style="left:1199px">CHA</div>
<div class="a serif dl" style="left:1276px">CHB</div>
<div class="a serif dl" style="left:1349px">A+B</div>
<div class="a serif dl" style="left:1432px">A−B</div>
<div class="a serif dl" style="left:1510px">X−Y</div>
<div class="a btn3" style="left:1184px;width:67px;background:#ffff00;border-color:#a0a000 #f8f880 #f8f880 #a0a000"></div>
<div class="a btn3" style="left:1261px;width:68px;background:#3ccc1e;border-color:#80e070 #1a8010 #1a8010 #80e070"></div>
<div class="a btn3" style="left:1340px;width:67px"></div>
<div class="a btn3" style="left:1418px;width:67px"></div>
<div class="a btn3" style="left:1496px;width:67px"></div>

<!-- bottom section -->
<div class="a" style="left:1152px;top:728px;width:438px;height:1px;background:#706c5c"></div>
<div class="a" style="left:1152px;top:729px;width:438px;height:137px;background:#f2efe3;border-top:3px solid #fbfaf2;border-left:3px solid #fbfaf2;border-right:3px solid;border-right-color:#e4e0d4"></div><div class="a" style="left:1586px;top:732px;width:1px;height:134px;background:#fdfcf6"></div>
<div class="a" style="left:1163px;top:730px;width:0;height:132px;border-left:1px dotted #000"></div>
<div class="a cj" style="left:1191px;top:751px;width:106px;height:23px;background:#ebe8dc;font-size:20px;letter-spacing:7.3px;line-height:23px;padding-left:2px">采集模式</div>
<div class="a gspn" style="left:1165px;top:781px;width:14px;height:29px"><i class="u" style="margin-left:-6px;border-width:0 6px 5px 6px;top:4px"></i><span class="m"></span><i class="d" style="margin-left:-6px;border-width:5px 6px 0 6px;bottom:4px"></i></div>
<div class="a cj" style="left:1180px;top:782px;width:115px;height:28px;background:#000;border:2px solid #fdfcf6;color:#2ec02e;font-size:20px;letter-spacing:8.3px;line-height:23px;padding-left:5px">分组采集</div>
<div class="a cj" style="left:1337px;top:739px;width:58px;height:17px;background:#ebe8dc;font-size:15px;line-height:17px"><span class="a" style="left:2px;top:0">触</span><span class="a" style="left:40px;top:0">发</span></div>
<div class="a cj" style="left:1463px;top:739px;width:57px;height:17px;background:#ebe8dc;font-size:15px;line-height:17px"><span class="a" style="left:2px;top:0">采</span><span class="a" style="left:39px;top:0">集</span></div>
<div class="a led" style="left:1327px;top:763px"></div>
<div class="a led" style="left:1452px;top:763px"></div>
<div class="a bbtn cj" style="left:1322px;top:811px;width:98px;height:36px">采集</div>
<div class="a bbtn cj" style="left:1451px;top:811px;width:100px;height:37px">退出</div>
<!-- axis -->
<div class="a tick" style="left:29px"></div>
<div class="a tick" style="left:140px"></div>
<div class="a tick" style="left:252px"></div>
<div class="a tick" style="left:364px"></div>
<div class="a tick" style="left:475px"></div>
<div class="a tick" style="left:587px"></div>
<div class="a tick" style="left:698px"></div>
<div class="a tick" style="left:810px"></div>
<div class="a tick" style="left:921px"></div>
<div class="a tick" style="left:1033px"></div>
<div class="a tick" style="left:1143px"></div>
<div class="a xl" style="left:29px">0</div>
<div class="a xl" style="left:140px">410</div>
<div class="a xl" style="left:252px">819</div>
<div class="a xl" style="left:364px">1229</div>
<div class="a xl" style="left:475px">1638</div>
<div class="a xl" style="left:587px">2048</div>
<div class="a xl" style="left:698px">2458</div>
<div class="a xl" style="left:810px">2867</div>
<div class="a xl" style="left:921px">3277</div>
<div class="a xl" style="left:1033px">3686</div>
<div class="a xl" style="left:1143px">4096</div>
<div class="a" style="left:30px;top:854px;width:1118px;height:10px;background:#808080;border-top:1px solid #5c5c5c;z-index:3"></div>
<div class="a" style="left:30px;top:852px;width:13px;height:13px;background:#0ca030;border:1px solid;border-color:#70f080 #006018 #006018 #70f080;z-index:3"></div>
<div class="a" style="left:35px;top:853px;width:1px;height:11px;background:#a0ffa8;z-index:3"></div>
</body></html>
